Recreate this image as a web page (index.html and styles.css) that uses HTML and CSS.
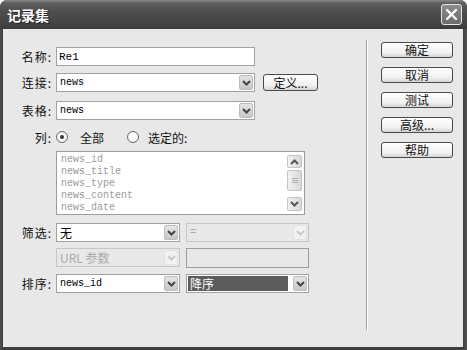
FILE: index.html
```html
<!DOCTYPE html>
<html lang="zh">

<head>
  <meta charset="UTF-8" />
  <title>记录集</title>
  <link rel="stylesheet" href="styles.css">
</head>

<body>
  <div class="window">
    <div class="titlebar">
      <span class="title">记录集</span>
      <span class="close">
        <svg width="13" height="13" viewBox="0 0 13 13"><path d="M2 2 L11 11 M11 2 L2 11" stroke="#fff" stroke-width="2.4" stroke-linecap="round" /></svg>
      </span>
    </div>

    <div class="frame">
      <div class="form">
        <div class="row r-name">
          <span class="lbl">名称:</span>
          <div class="textbox w-wide"><span class="val big">Re1</span></div>
        </div>

        <div class="row r-conn">
          <span class="lbl">连接:</span>
          <div class="select w-wide">
            <span class="val">news</span>
            <span class="arrow"><svg width="9" height="6" viewBox="0 0 9 6"><path d="M1 1 L4.5 4.5 L8 1" fill="none" stroke="#444" stroke-width="2" /></svg></span>
          </div>
          <span class="btn btn-def">定义...</span>
        </div>

        <div class="row r-table">
          <span class="lbl">表格:</span>
          <div class="select w-wide">
            <span class="val">news</span>
            <span class="arrow"><svg width="9" height="6" viewBox="0 0 9 6"><path d="M1 1 L4.5 4.5 L8 1" fill="none" stroke="#444" stroke-width="2" /></svg></span>
          </div>
        </div>

        <div class="row r-cols">
          <span class="lbl">列:</span>
          <span class="radio checked"></span>
          <span class="opt">全部</span>
          <span class="radio r2"></span>
          <span class="opt">选定的:</span>
        </div>

        <div class="listbox">
          <div class="items">
            <div>news_id</div>
            <div>news_title</div>
            <div>news_type</div>
            <div>news_content</div>
            <div>news_date</div>
          </div>
          <div class="scroll">
            <span class="sbtn"><svg width="9" height="6" viewBox="0 0 9 6"><path d="M1 5 L4.5 1.5 L8 5" fill="none" stroke="#555" stroke-width="2" /></svg></span>
            <span class="thumb"><i></i><i></i><i></i></span>
            <span class="sbtn down"><svg width="9" height="6" viewBox="0 0 9 6"><path d="M1 1 L4.5 4.5 L8 1" fill="none" stroke="#555" stroke-width="2" /></svg></span>
          </div>
        </div>

        <div class="row r-filter">
          <span class="lbl">筛选:</span>
          <div class="select w-half">
            <span class="val cjk">无</span>
            <span class="arrow"><svg width="9" height="6" viewBox="0 0 9 6"><path d="M1 1 L4.5 4.5 L8 1" fill="none" stroke="#444" stroke-width="2" /></svg></span>
          </div>
          <div class="select w-half2 disabled">
            <span class="val">=</span>
            <span class="arrow"><svg width="9" height="6" viewBox="0 0 9 6"><path d="M1 1 L4.5 4.5 L8 1" fill="none" stroke="#c8c8c8" stroke-width="2" /></svg></span>
          </div>
        </div>

        <div class="row r-url">
          <span class="lbl"></span>
          <div class="select w-half disabled">
            <span class="val cjk">URL 参数</span>
            <span class="arrow"><svg width="9" height="6" viewBox="0 0 9 6"><path d="M1 1 L4.5 4.5 L8 1" fill="none" stroke="#c8c8c8" stroke-width="2" /></svg></span>
          </div>
          <div class="textbox w-half2 off"></div>
        </div>

        <div class="row r-sort">
          <span class="lbl">排序:</span>
          <div class="select w-half">
            <span class="val">news_id</span>
            <span class="arrow"><svg width="9" height="6" viewBox="0 0 9 6"><path d="M1 1 L4.5 4.5 L8 1" fill="none" stroke="#444" stroke-width="2" /></svg></span>
          </div>
          <div class="select w-half2">
            <span class="val picked">降序</span>
            <span class="arrow"><svg width="9" height="6" viewBox="0 0 9 6"><path d="M1 1 L4.5 4.5 L8 1" fill="none" stroke="#444" stroke-width="2" /></svg></span>
          </div>
        </div>
      </div>

      <div class="divider"></div>

      <div class="actions">
        <span class="btn">确定</span>
        <span class="btn">取消</span>
        <span class="btn">测试</span>
        <span class="btn">高级...</span>
        <span class="btn">帮助</span>
      </div>
    </div>
  </div>
</body>

</html>
```

FILE: styles.css
```css
html,
body {
  margin: 0;
}

body {
  width: 467px;
  height: 350px;
  overflow: hidden;
  background-color: #fff;
  font-family: "Noto Sans CJK SC", sans-serif;
  font-size: 12px;
  color: #111;
}

.window {
  width: 467px;
  height: 350px;
  display: flex;
  flex-direction: column;
  background: linear-gradient(90deg, #505050, #3e3e3e 3px, #3e3e3e 463px, #555);
  border-radius: 7px 7px 0 0;
  overflow: hidden;
}

.titlebar {
  height: 29px;
  display: flex;
  align-items: center;
  padding: 0 5px 0 7px;
  background: linear-gradient(#8a8a8a, #5e5e5e 3px, #4e4e4e 40%, #444 80%, #3c3c3c);
}

.title {
  color: #fff;
  font-weight: bold;
  font-size: 14px;
  text-shadow: 1px 1px #222;
}

.close {
  margin-left: auto;
  width: 19px;
  height: 19px;
  border: 1px solid #e6e6e6;
  border-radius: 3px;
  background: linear-gradient(#8c8c8c, #6c6c6c);
  display: flex;
  align-items: center;
  justify-content: center;
}

.frame {
  flex: 1;
  display: flex;
  margin: 0 4px 3px 3px;
  background-color: #e8e8e8;
}

.form {
  width: 363px;
  padding-top: 18px;
}

.row {
  display: flex;
  align-items: center;
  height: 19px;
}

.r-conn { margin-top: 7px; }
.r-table { margin-top: 9px; }
.r-cols { margin-top: 10px; height: 14px; }
.r-filter { margin-top: 8px; }
.r-url { margin-top: 6px; }
.r-sort { margin-top: 7px; }

.lbl {
  width: 49px;
  margin-right: 4px;
  text-align: right;
  letter-spacing: 1px;
}

.textbox,
.select {
  box-sizing: border-box;
  height: 19px;
  border: 1px solid #a2a2a2;
  background-color: #fff;
  display: flex;
  align-items: center;
}

.w-wide { width: 199px; }
.w-half { width: 124px; }
.w-half2 { width: 123px; margin-left: 6px; }

.val {
  flex: 1;
  padding-left: 3px;
  font-family: "Liberation Mono", monospace;
  font-size: 10px;
  color: #000;
}

.val.big {
  font-size: 11px;
  padding-left: 2px;
}

.val.cjk {
  font-family: "Noto Sans CJK SC", sans-serif;
  font-size: 12px;
}

.val.picked {
  flex: none;
  width: 98px;
  height: 15px;
  margin-left: 1px;
  padding-left: 2px;
  line-height: 15px;
  background-color: #5c5c5c;
  color: #fff;
  font-family: "Noto Sans CJK SC", sans-serif;
  font-size: 12px;
}

.arrow {
  width: 14px;
  height: 15px;
  margin-right: 1px;
  margin-left: auto;
  border: 1px solid #bdbdbd;
  border-radius: 2px;
  box-sizing: border-box;
  background: linear-gradient(#e4e4e4, #c8c8c8);
  display: flex;
  align-items: center;
  justify-content: center;
}

.select.disabled {
  background-color: #e8e8e8;
  border-color: #c6c6c6;
}

.select.disabled .val {
  color: #a8a8a8;
}

.select.disabled .arrow {
  background: #f2f2f2;
  border-color: #e2e2e2;
}

.textbox.off {
  height: 20px;
  background-color: #e8e8e8;
  border-color: #9c9c9c;
}

.btn {
  box-sizing: border-box;
  width: 72px;
  height: 16px;
  border: 1px solid #4a4a4a;
  border-radius: 3px;
  background: linear-gradient(#ffffff, #f0f0f0 70%, #d4d4d4);
  text-align: center;
  line-height: 14px;
}

.btn-def {
  width: 55px;
  height: 17px;
  margin-left: 8px;
  line-height: 15px;
}

.radio {
  box-sizing: border-box;
  width: 12px;
  height: 12px;
  border: 1px solid #6a6a6a;
  border-radius: 50%;
  background: radial-gradient(#fff 40%, #e0e0e0);
  display: flex;
  align-items: center;
  justify-content: center;
}

.radio.checked::after {
  content: "";
  width: 4px;
  height: 4px;
  border-radius: 50%;
  background-color: #333;
}

.radio.r2 {
  margin-left: 23px;
}

.opt {
  margin-left: 12px;
}

.r-cols .opt:last-child {
  margin-left: 9px;
}

.listbox {
  box-sizing: border-box;
  width: 249px;
  height: 64px;
  margin: 7px 0 0 53px;
  border: 1px solid #9c9c9c;
  background-color: #fff;
  display: flex;
}

.items {
  flex: 1;
  padding: 2px 0 0 4px;
  font-family: "Liberation Mono", monospace;
  font-size: 10px;
  line-height: 12px;
  color: #9a9a9a;
}

.scroll {
  width: 15px;
  margin-right: 2px;
  padding: 3px 0;
  display: flex;
  flex-direction: column;
}

.sbtn,
.thumb {
  box-sizing: border-box;
  border: 1px solid #c4c4c4;
  border-radius: 2px;
  background: linear-gradient(90deg, #f2f2f2, #d8d8d8);
  display: flex;
  align-items: center;
  justify-content: center;
}

.sbtn {
  height: 13px;
}

.sbtn.down {
  margin-top: auto;
  height: 14px;
}

.thumb {
  height: 21px;
  margin-top: 2px;
  flex-direction: column;
  gap: 1px;
}

.thumb i {
  width: 6px;
  height: 1px;
  background-color: #b0b0b0;
}

.divider {
  width: 1px;
  margin: 11px 0 17px;
  background-color: #a4a4a4;
  border-right: 1px solid #fafafa;
}

.actions {
  margin-left: 13px;
  padding-top: 13px;
  display: flex;
  flex-direction: column;
  gap: 9px;
}
```
